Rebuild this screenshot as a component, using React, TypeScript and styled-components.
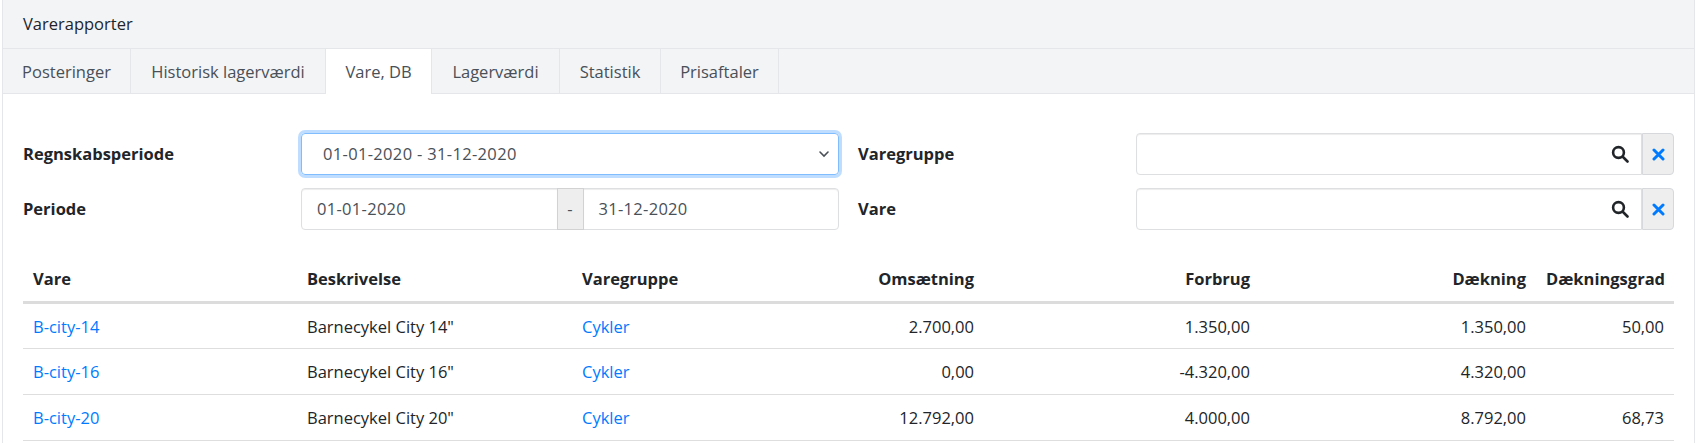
import React from "react";
import styled, { createGlobalStyle } from "styled-components";

const Global = createGlobalStyle`
  html, body { margin: 0; padding: 0; background: #fff; }
  body { font-family: "Open Sans", "Noto Sans", "Liberation Sans", sans-serif; font-size: 16.5px; line-height: 24px; color: #212529; }
  * { box-sizing: border-box; }
`;

const Card = styled.div`
  margin: 0 4px 0 2px;
  height: 443px;
  overflow: hidden;
  border-left: 1px solid #e4e6ea;
  border-right: 1px solid #e4e6ea;
`;
const CardHeader = styled.div`
  height: 49px;
  background: #f3f4f6;
  border-bottom: 1px solid #e4e6ea;
  padding: 12px 20px;
  font-weight: 500;
`;
const TabBar = styled.div`
  display: flex;
  height: 45px;
  background: #f3f4f6;
  border-bottom: 1px solid #e4e6ea;
`;
const Tab = styled.div<{ $active?: boolean; $w: number }>`
  width: ${(p) => p.$w}px;
  height: ${(p) => (p.$active ? "45px" : "44px")};
  padding-top: 11px;
  text-align: center;
  white-space: nowrap;
  color: #495057;
  background: ${(p) => (p.$active ? "#fff" : "transparent")};
  border-right: 1px solid #e4e6ea;
`;
const Body = styled.div`
  padding: 39px 20px 0;
`;
const Form = styled.div`
  display: grid;
  grid-template-columns: 278px 538px 19px 278px 538px;
  grid-auto-rows: 42px;
  row-gap: 13px;
  align-items: center;
`;
const Label = styled.div`
  font-weight: 700;
`;
const Select = styled.div`
  height: 42px;
  border: 1px solid #80bdff;
  border-radius: 4px;
  box-shadow: 0 0 0 3px rgba(0, 123, 255, 0.25);
  display: flex;
  align-items: center;
  justify-content: space-between;
  padding: 0 8px 0 21px;
  color: #495057;
  letter-spacing: 0.33px;
`;
const InputGroup = styled.div`
  height: 42px;
  display: flex;
  color: #495057;
`;
const DateInput = styled.div<{ $side: "left" | "right" }>`
  flex: 1;
  border: 1px solid #dedfe1;
  border-radius: ${(p) => (p.$side === "left" ? "4px 0 0 4px" : "0 4px 4px 0")};
  box-shadow: inset 0 1px 1px rgba(0, 0, 0, 0.075);
  padding: 8px 15px;
  letter-spacing: 0.3px;
`;
const Dash = styled.div`
  width: 27px;
  background: #eeeeee;
  border: 1px solid #d2d2d2;
  margin: 0 -1px;
  text-align: center;
  padding-top: 8px;
  position: relative;
`;
const Search = styled.div`
  flex: 1;
  border: 1px solid #dedfe1;
  border-radius: 4px 0 0 4px;
  box-shadow: inset 0 1px 1px rgba(0, 0, 0, 0.075);
  display: flex;
  align-items: center;
  justify-content: flex-end;
  padding-right: 12px;
`;
const Clear = styled.div`
  width: 32px;
  background: #eeeeef;
  border: 1px solid #d6d8db;
  border-radius: 0 4px 4px 0;
  display: flex;
  align-items: center;
  justify-content: center;
`;
const Table = styled.table`
  width: 100%;
  margin-top: 23px;
  border-collapse: collapse;
  table-layout: fixed;
`;
const Th = styled.th<{ $right?: boolean; $w: number }>`
  width: ${(p) => p.$w}px;
  height: 49px;
  padding: 4px 10px 0;
  text-align: ${(p) => (p.$right ? "right" : "left")};
  border-bottom: 3px solid #dcdcdc;
  font-weight: 700;
  white-space: nowrap;
`;
const Td = styled.td<{ $right?: boolean }>`
  height: 46px;
  padding: 2px 10px 0;
  text-align: ${(p) => (p.$right ? "right" : "left")};
  border-bottom: 1px solid #dedede;
`;
const Link = styled.a`
  color: #007bff;
  text-decoration: none;
`;

const rows = [
  ["B-city-14", 'Barnecykel City 14"', "Cykler", "2.700,00", "1.350,00", "1.350,00", "50,00"],
  ["B-city-16", 'Barnecykel City 16"', "Cykler", "0,00", "-4.320,00", "4.320,00", ""],
  ["B-city-20", 'Barnecykel City 20"', "Cykler", "12.792,00", "4.000,00", "8.792,00", "68,73"],
];

const SearchIcon = () => (
  <svg width="18" height="18" viewBox="0 0 18 18" fill="none" stroke="#212529" strokeWidth="2.6">
    <circle cx="7.5" cy="7.5" r="5.4" />
    <path d="M12 12l4.5 4.5" strokeLinecap="round" />
  </svg>
);
const XIcon = () => (
  <svg width="13" height="13" viewBox="0 0 13 13" fill="none" stroke="#007bff" strokeWidth="3">
    <path d="M2 2l9 9M11 2l-9 9" strokeLinecap="round" />
  </svg>
);
const Chevron = () => (
  <svg width="12" height="12" viewBox="0 0 12 12" fill="none" stroke="#495057" strokeWidth="1.6">
    <path d="M2 4l4 4 4-4" strokeLinecap="round" />
  </svg>
);

export default function App() {
  return (
    <Card>
      <Global />
      <CardHeader>Varerapporter</CardHeader>
      <TabBar>
        <Tab $w={128}>Posteringer</Tab>
        <Tab $w={195}>Historisk lagerværdi</Tab>
        <Tab $w={106} $active>Vare, DB</Tab>
        <Tab $w={128}>Lagerværdi</Tab>
        <Tab $w={101}>Statistik</Tab>
        <Tab $w={118}>Prisaftaler</Tab>
      </TabBar>
      <Body>
        <Form>
          <Label>Regnskabsperiode</Label>
          <Select>
            <span>01-01-2020 - 31-12-2020</span>
            <Chevron />
          </Select>
          <span />
          <Label>Varegruppe</Label>
          <InputGroup>
            <Search><SearchIcon /></Search>
            <Clear><XIcon /></Clear>
          </InputGroup>
          <Label>Periode</Label>
          <InputGroup>
            <DateInput $side="left">01-01-2020</DateInput>
            <Dash>-</Dash>
            <DateInput $side="right">31-12-2020</DateInput>
          </InputGroup>
          <span />
          <Label>Vare</Label>
          <InputGroup>
            <Search><SearchIcon /></Search>
            <Clear><XIcon /></Clear>
          </InputGroup>
        </Form>
        <Table>
          <thead>
            <tr>
              <Th $w={274}>Vare</Th>
              <Th $w={275}>Beskrivelse</Th>
              <Th $w={274}>Varegruppe</Th>
              <Th $w={138} $right>Omsætning</Th>
              <Th $w={276} $right>Forbrug</Th>
              <Th $w={276} $right>Dækning</Th>
              <Th $w={138} $right>Dækningsgrad</Th>
            </tr>
          </thead>
          <tbody>
            {rows.map((r) => (
              <tr key={r[0]}>
                <Td><Link>{r[0]}</Link></Td>
                <Td>{r[1]}</Td>
                <Td><Link>{r[2]}</Link></Td>
                <Td $right>{r[3]}</Td>
                <Td $right>{r[4]}</Td>
                <Td $right>{r[5]}</Td>
                <Td $right>{r[6]}</Td>
              </tr>
            ))}
          </tbody>
        </Table>
      </Body>
    </Card>
  );
}
